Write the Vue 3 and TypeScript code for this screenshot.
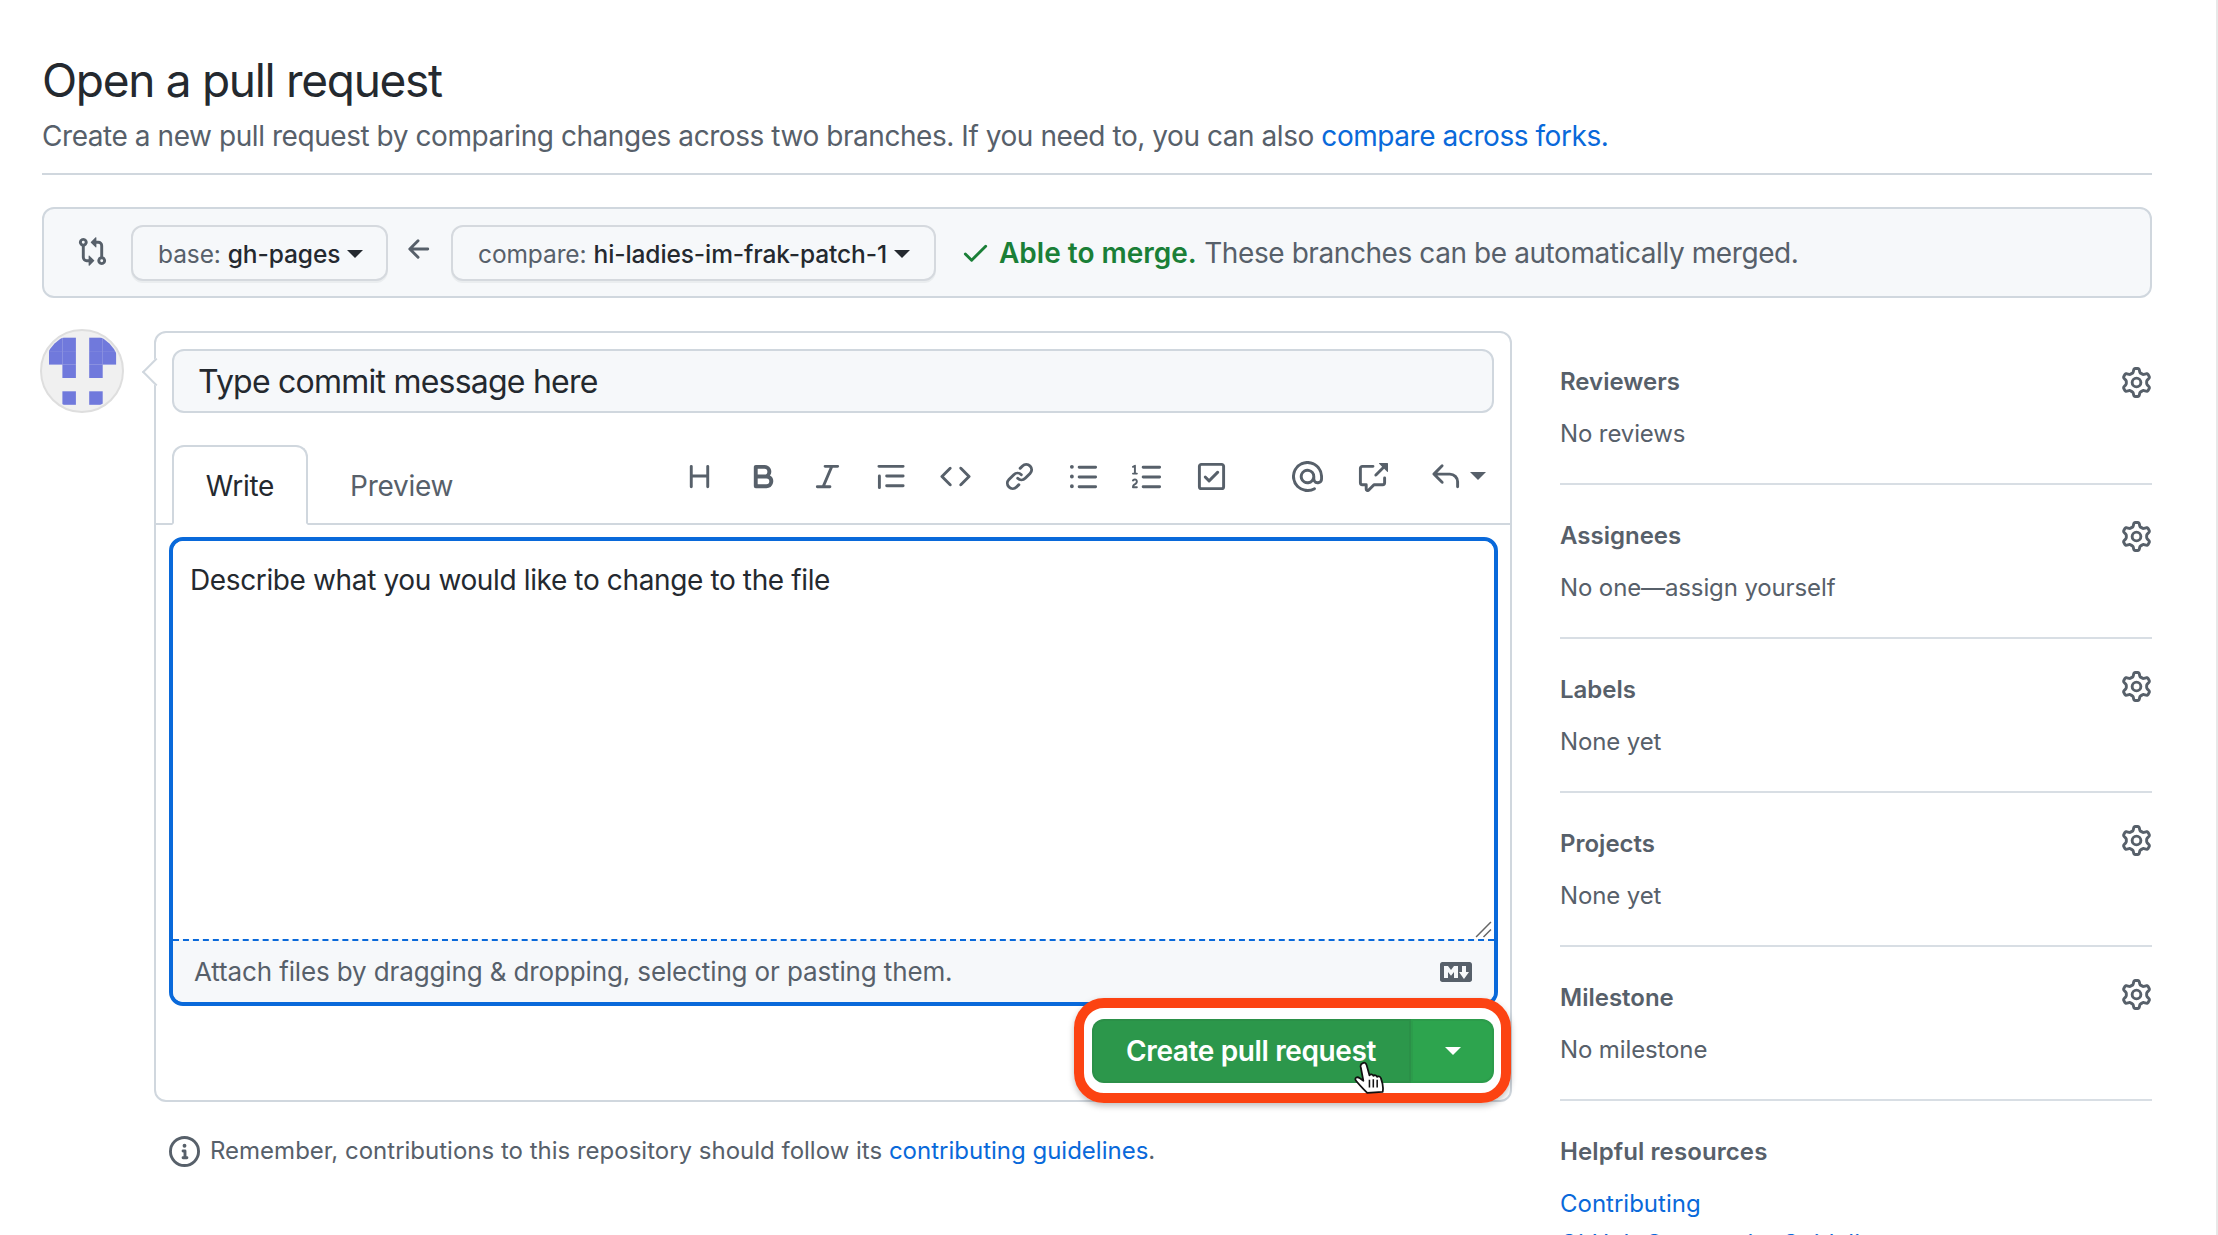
<script setup lang="ts">
type Tool = { name: string; d: string; gap: string };
type Section = { title: string; value: string; raised?: boolean };

const gearPath =
  "M8 0a8.2 8.2 0 0 1 .701.031C9.444.095 9.99.645 10.16 1.29l.288 1.107c.018.066.079.158.212.224.231.114.454.243.668.386.123.082.233.09.299.071l1.103-.303c.644-.176 1.392.021 1.82.63.27.385.506.792.704 1.218.315.675.111 1.422-.364 1.891l-.814.806c-.049.048-.098.147-.088.294.016.257.016.515 0 .772-.01.147.038.246.088.294l.814.806c.475.469.679 1.216.364 1.891a7.977 7.977 0 0 1-.704 1.217c-.428.61-1.176.807-1.82.63l-1.102-.302c-.067-.019-.177-.011-.3.071a5.909 5.909 0 0 1-.668.386c-.133.066-.194.158-.211.224l-.29 1.106c-.168.646-.715 1.196-1.458 1.26a8.006 8.006 0 0 1-1.402 0c-.743-.064-1.289-.614-1.458-1.26l-.289-1.106c-.018-.066-.079-.158-.212-.224a5.738 5.738 0 0 1-.668-.386c-.123-.082-.233-.09-.299-.071l-1.103.303c-.644.176-1.392-.021-1.82-.63a8.12 8.12 0 0 1-.704-1.218c-.315-.675-.111-1.422.363-1.891l.815-.806c.05-.048.098-.147.088-.294a6.214 6.214 0 0 1 0-.772c.01-.147-.038-.246-.088-.294l-.815-.806C.635 6.045.431 5.298.746 4.623a7.92 7.92 0 0 1 .704-1.217c.428-.61 1.176-.807 1.82-.63l1.102.302c.067.019.177.011.3-.071.214-.143.437-.272.668-.386.133-.066.194-.158.211-.224l.29-1.106C6.009.645 6.556.095 7.299.03 7.53.01 7.764 0 8 0Zm-.571 1.525c-.036.003-.108.036-.137.146l-.289 1.105c-.147.561-.549.967-.998 1.189-.173.086-.34.183-.5.29-.417.278-.97.423-1.529.27l-1.103-.303c-.109-.03-.175.016-.195.045-.22.312-.412.644-.573.99-.014.031-.021.11.059.19l.815.806c.411.406.562.957.53 1.456a4.709 4.709 0 0 0 0 .582c.032.499-.119 1.05-.53 1.456l-.815.806c-.081.08-.073.159-.059.19.162.346.353.677.573.989.02.03.085.076.195.046l1.102-.303c.56-.153 1.113-.008 1.53.27.161.107.328.204.501.29.447.222.85.629.997 1.189l.289 1.105c.029.109.101.143.137.146a6.6 6.6 0 0 0 1.142 0c.036-.003.108-.036.137-.146l.289-1.105c.147-.561.549-.967.998-1.189.173-.086.34-.183.5-.29.417-.278.97-.423 1.529-.27l1.103.303c.109.029.175-.016.195-.045.22-.313.411-.644.573-.99.014-.031.021-.11-.059-.19l-.815-.806c-.411-.406-.562-.957-.53-1.456a4.709 4.709 0 0 0 0-.582c-.032-.499.119-1.05.53-1.456l.815-.806c.081-.08.073-.159.059-.19a6.464 6.464 0 0 0-.573-.989c-.02-.03-.085-.076-.195-.046l-1.102.303c-.56.153-1.113.008-1.53-.27a4.44 4.44 0 0 0-.501-.29c-.447-.222-.85-.629-.997-1.189l-.289-1.105c-.029-.11-.101-.143-.137-.146a6.6 6.6 0 0 0-1.142 0ZM11 8a3 3 0 1 1-6 0 3 3 0 0 1 6 0ZM9.5 8a1.5 1.5 0 1 0-3.001.001A1.5 1.5 0 0 0 9.5 8Z";

const tools: Tool[] = [
  { name: "heading", gap: "g33", d: "M3.75 2a.75.75 0 0 1 .75.75V7h7V2.75a.75.75 0 0 1 1.5 0v10.5a.75.75 0 0 1-1.5 0V8.5h-7v4.75a.75.75 0 0 1-1.5 0V2.75A.75.75 0 0 1 3.75 2Z" },
  { name: "bold", gap: "g33", d: "M4 2h4.5a3.501 3.501 0 0 1 2.852 5.53A3.499 3.499 0 0 1 9.5 14H4a1 1 0 0 1-1-1V3a1 1 0 0 1 1-1Zm1 7v3h4.5a1.5 1.5 0 0 0 0-3Zm3.5-2a1.5 1.5 0 0 0 0-3H5v3Z" },
  { name: "italic", gap: "g33", d: "M6 2.75A.75.75 0 0 1 6.75 2h6.5a.75.75 0 0 1 0 1.5h-2.505l-3.858 9H9.25a.75.75 0 0 1 0 1.5h-6.5a.75.75 0 0 1 0-1.5h2.505l3.858-9H6.75A.75.75 0 0 1 6 2.75Z" },
  { name: "quote", gap: "g33", d: "M.75 2.75A.75.75 0 0 1 1.5 2h12.5a.75.75 0 0 1 0 1.5H1.5a.75.75 0 0 1-.75-.75Zm4 5A.75.75 0 0 1 5.5 7h8.5a.75.75 0 0 1 0 1.5H5.5a.75.75 0 0 1-.75-.75Zm0 5a.75.75 0 0 1 .75-.75h8.5a.75.75 0 0 1 0 1.5H5.5a.75.75 0 0 1-.75-.75ZM2.5 7.75v6a.75.75 0 0 1-1.5 0v-6a.75.75 0 0 1 1.5 0Z" },
  { name: "code", gap: "g33", d: "m11.28 3.22 4.25 4.25a.75.75 0 0 1 0 1.06l-4.25 4.25a.749.749 0 0 1-1.275-.326.749.749 0 0 1 .215-.734L13.94 8l-3.72-3.72a.749.749 0 0 1 .326-1.275.749.749 0 0 1 .734.215Zm-6.56 0a.751.751 0 0 1 1.042.018.751.751 0 0 1 .018 1.042L2.06 8l3.72 3.72a.749.749 0 0 1-.326 1.275.749.749 0 0 1-.734-.215L.47 8.53a.75.75 0 0 1 0-1.06Z" },
  { name: "link", gap: "g33", d: "m7.775 3.275 1.25-1.25a3.5 3.5 0 1 1 4.95 4.95l-2.5 2.5a3.5 3.5 0 0 1-4.95 0 .751.751 0 0 1 .018-1.042.751.751 0 0 1 1.042-.018 1.998 1.998 0 0 0 2.83 0l2.5-2.5a2.002 2.002 0 0 0-2.83-2.83l-1.25 1.25a.751.751 0 0 1-1.042-.018.751.751 0 0 1-.018-1.042Zm-4.69 9.64a1.998 1.998 0 0 0 2.83 0l1.25-1.25a.751.751 0 0 1 1.042.018.751.751 0 0 1 .018 1.042l-1.25 1.25a3.5 3.5 0 1 1-4.95-4.95l2.5-2.5a3.5 3.5 0 0 1 4.95 0 .751.751 0 0 1-.018 1.042.751.751 0 0 1-1.042.018 1.998 1.998 0 0 0-2.83 0l-2.5 2.5a1.998 1.998 0 0 0 0 2.83Z" },
  { name: "ul", gap: "g33", d: "M5.75 2.5h8.5a.75.75 0 0 1 0 1.5h-8.5a.75.75 0 0 1 0-1.5Zm0 5h8.5a.75.75 0 0 1 0 1.5h-8.5a.75.75 0 0 1 0-1.5Zm0 5h8.5a.75.75 0 0 1 0 1.5h-8.5a.75.75 0 0 1 0-1.5ZM2 14a1 1 0 1 1 0-2 1 1 0 0 1 0 2Zm1-6a1 1 0 1 1-2 0 1 1 0 0 1 2 0ZM2 4a1 1 0 1 1 0-2 1 1 0 0 1 0 2Z" },
  { name: "ol", gap: "g33", d: "M5 3.25a.75.75 0 0 1 .75-.75h8.5a.75.75 0 0 1 0 1.5h-8.5A.75.75 0 0 1 5 3.25Zm0 5a.75.75 0 0 1 .75-.75h8.5a.75.75 0 0 1 0 1.5h-8.5A.75.75 0 0 1 5 8.25Zm0 5a.75.75 0 0 1 .75-.75h8.5a.75.75 0 0 1 0 1.5h-8.5a.75.75 0 0 1-.75-.75ZM.924 10.32a.5.5 0 0 1-.851-.525l.001-.001.001-.002.002-.004.007-.011c.097-.144.215-.273.348-.384.228-.19.588-.392 1.068-.392.468 0 .858.181 1.126.484.259.294.377.673.377 1.038 0 .987-.686 1.495-1.156 1.845l-.047.035c-.303.225-.522.4-.654.597h1.357a.5.5 0 0 1 0 1H.5a.5.5 0 0 1-.5-.5c0-1.005.692-1.52 1.167-1.875l.035-.025c.531-.396.8-.625.8-1.078a.57.57 0 0 0-.128-.376C1.806 10.068 1.695 10 1.5 10a.658.658 0 0 0-.429.163.835.835 0 0 0-.144.153ZM2.003 2.5V6h.503a.5.5 0 0 1 0 1H.5a.5.5 0 0 1 0-1h.503V3.308l-.28.14a.5.5 0 0 1-.446-.895l1.003-.5a.5.5 0 0 1 .723.447Z" },
  { name: "task", gap: "g65", d: "M2.75 1h10.5c.966 0 1.75.784 1.75 1.75v10.5A1.75 1.75 0 0 1 13.25 15H2.75A1.75 1.75 0 0 1 1 13.25V2.75C1 1.784 1.784 1 2.75 1ZM2.5 2.75v10.5c0 .138.112.25.25.25h10.5a.25.25 0 0 0 .25-.25V2.75a.25.25 0 0 0-.25-.25H2.75a.25.25 0 0 0-.25.25Zm9.28 3.53-4.5 4.5a.75.75 0 0 1-1.06 0l-2-2a.751.751 0 0 1 .018-1.042.751.751 0 0 1 1.042-.018l1.47 1.47 3.97-3.97a.751.751 0 0 1 1.042.018.751.751 0 0 1 .018 1.042Z" },
  { name: "mention", gap: "g34", d: "M4.75 2.37a6.501 6.501 0 0 0 6.5 11.26.75.75 0 0 1 .75 1.298A7.999 7.999 0 0 1 .989 4.148 8 8 0 0 1 16 7.75v1.5a2.75 2.75 0 0 1-5.072 1.475 3.999 3.999 0 0 1-6.65-4.19A4 4 0 0 1 12 8v1.25a1.25 1.25 0 0 0 2.5 0V7.867a6.5 6.5 0 0 0-9.75-5.496ZM10.5 8a2.5 2.5 0 1 0-5 0 2.5 2.5 0 0 0 5 0Z" },
  { name: "xref", gap: "g42", d: "M2.75 3.5a.25.25 0 0 0-.25.25v7.5c0 .138.112.25.25.25h2a.75.75 0 0 1 .75.75v2.19l2.72-2.72a.749.749 0 0 1 .53-.22h4.5a.25.25 0 0 0 .25-.25v-2.5a.75.75 0 0 1 1.5 0v2.5A1.75 1.75 0 0 1 13.25 13H9.06l-2.573 2.573A1.458 1.458 0 0 1 4 14.543V13H2.75A1.75 1.75 0 0 1 1 11.25v-7.5C1 2.784 1.784 2 2.75 2h5.5a.75.75 0 0 1 0 1.5ZM16 1.25v4.146a.25.25 0 0 1-.427.177L14.03 4.03l-3.75 3.75a.749.749 0 0 1-1.275-.326.749.749 0 0 1 .215-.734l3.75-3.75-1.543-1.543A.25.25 0 0 1 11.604 1h4.146a.25.25 0 0 1 .25.25Z" },
  { name: "reply", gap: "g0", d: "M6.78 1.97a.75.75 0 0 1 0 1.06L3.81 6h6.44A4.75 4.75 0 0 1 15 10.75v2.5a.75.75 0 0 1-1.5 0v-2.5a3.25 3.25 0 0 0-3.25-3.25H3.81l2.97 2.97a.749.749 0 0 1-.326 1.275.749.749 0 0 1-.734-.215L1.47 7.28a.75.75 0 0 1 0-1.06l4.25-4.25a.75.75 0 0 1 1.06 0Z" },
];

const sections: Section[] = [
  { title: "Reviewers", value: "No reviews" },
  { title: "Assignees", value: "No one—assign yourself" },
  { title: "Labels", value: "None yet", raised: true },
  { title: "Projects", value: "None yet", raised: true },
  { title: "Milestone", value: "No milestone", raised: true },
];

// identicon cells as [col, row]
const cells: [number, number][] = [
  [0, 0], [1, 0], [3, 0], [4, 0],
  [0, 1], [1, 1], [3, 1], [4, 1],
  [1, 2], [3, 2],
  [1, 4], [3, 4],
];
</script>

<template>
  <div class="page">
    <header class="head">
      <h1>Open a pull request</h1>
      <p>
        Create a new pull request by comparing changes across two branches. If you need to, you can also
        <a>compare across forks</a><span class="dot">.</span>
      </p>
    </header>

    <div class="range">
      <svg class="icon compare-icon" viewBox="0 0 16 16"><path d="M9.573.677A.25.25 0 0 1 10 .854V2.5h1A2.5 2.5 0 0 1 13.5 5v5.628a2.251 2.251 0 1 1-1.5 0V5a1 1 0 0 0-1-1h-1v1.646a.25.25 0 0 1-.427.177L7.177 3.427a.25.25 0 0 1 0-.354ZM6 12v-1.646a.25.25 0 0 1 .427-.177l2.396 2.396a.25.25 0 0 1 0 .354l-2.396 2.396A.25.25 0 0 1 6 15.146V13.5H5A2.5 2.5 0 0 1 2.5 11V5.372a2.25 2.25 0 1 1 1.5 0V11a1 1 0 0 0 1 1ZM4 3.25a.75.75 0 1 0-1.5 0 .75.75 0 0 0 1.5 0ZM12.75 12a.75.75 0 1 0 0 1.5.75.75 0 0 0 0-1.5Z" /></svg>
      <div class="select base"><span class="muted">base:</span> <span class="ref">gh-pages</span><i class="caret dark"></i></div>
      <svg class="icon arrow" viewBox="0 0 16 16"><path d="M7.78 12.53a.75.75 0 0 1-1.06 0L2.47 8.28a.75.75 0 0 1 0-1.06l4.25-4.25a.751.751 0 0 1 1.042.018.751.751 0 0 1 .018 1.042L4.81 7h7.44a.75.75 0 0 1 0 1.5H4.81l2.97 2.97a.75.75 0 0 1 0 1.06Z" /></svg>
      <div class="select head-ref"><span class="muted">compare:</span> <span class="ref">hi-ladies-im-frak-patch-1</span><i class="caret dark"></i></div>
      <svg class="icon check" viewBox="0 0 16 16"><path d="M13.78 4.22a.75.75 0 0 1 0 1.06l-7.25 7.25a.75.75 0 0 1-1.06 0L2.22 9.28a.751.751 0 0 1 .018-1.042.751.751 0 0 1 1.042-.018L6 10.94l6.72-6.72a.75.75 0 0 1 1.06 0Z" /></svg>
      <div class="merge"><strong>Able to merge.</strong> These branches can be automatically merged.</div>
    </div>

    <div class="layout">
      <div class="left">
        <div class="discussion">
          <svg class="avatar" viewBox="0 0 84 84">
            <defs><clipPath id="av"><circle cx="42" cy="42" r="38.8" /></clipPath></defs>
            <circle cx="42" cy="42" r="41" fill="#f0f0f0" stroke="#dedede" stroke-width="2" />
            <g clip-path="url(#av)" fill="#7079dc">
              <rect v-for="c in cells" :key="c.join('-')" :x="9 + c[0] * 13.4" :y="8.7 + c[1] * 13.4" width="13.5" height="13.5" />
            </g>
          </svg>
          <div class="card">
            <i class="pointer"></i>
            <div class="title-input">Type commit message here</div>
            <div class="tabbar">
              <div class="tab active">Write</div>
              <div class="tab">Preview</div>
              <div class="toolbar">
                <svg v-for="t in tools" :key="t.name" class="icon" :class="t.gap" viewBox="0 0 16 16"><path :d="t.d" /></svg>
                <i class="caret grey"></i>
              </div>
            </div>
            <div class="editor">
              <div class="body">
                Describe what you would like to change to the file
                <svg class="grip" viewBox="0 0 16 16"><path d="M15 1 1 15M15 8l-7 7" stroke="#666" stroke-width="1.4" fill="none" /></svg>
              </div>
              <div class="attach">
                <span>Attach files by dragging &amp; dropping, selecting or pasting them.</span>
                <svg class="md" viewBox="0 0 16 16"><path d="M14.85 3c.63 0 1.15.52 1.14 1.15v7.7c0 .63-.51 1.15-1.15 1.15H1.15C.52 13 0 12.48 0 11.86V4.15C0 3.52.52 3 1.15 3ZM9 11V5H7L5.5 7 4 5H2v6h2V8l1.5 1.92L7 8v3Zm2.99.5L14.5 8H13V5h-2v3H9.5Z" /></svg>
              </div>
            </div>
            <div class="actions">
              <div class="btn-group">
                <div class="btn-main">Create pull request</div>
                <div class="btn-more"><i class="caret white"></i></div>
                <div class="highlight"></div>
                <svg class="hand" viewBox="0 0 29 30">
                  <path d="M8 2C9.5 1 11 2 11.5 4L14 13C15 11.5 17 12 17.5 13.5 18.5 12.5 20.5 13 21 14.5 22 13.5 24 14 24.5 16 26 20 27 23 26 28L12 29C9 26 5 22 1.5 17.5.5 15 3 14 5 15.5L8.5 18 6 5C5.8 3.5 6.8 2.5 8 2Z" fill="#fff" stroke="#111" stroke-width="1.6" stroke-linejoin="round" />
                  <path d="M14 17v7M17.5 16.5v7.5M21 17v7" stroke="#111" stroke-width="1.4" fill="none" />
                </svg>
              </div>
            </div>
          </div>
        </div>
        <div class="note">
          <svg class="icon" viewBox="0 0 16 16"><path d="M0 8a8 8 0 1 1 16 0A8 8 0 0 1 0 8Zm8-6.5a6.5 6.5 0 1 0 0 13 6.5 6.5 0 0 0 0-13ZM6.5 7.75A.75.75 0 0 1 7.25 7h1a.75.75 0 0 1 .75.75v2.75h.25a.75.75 0 0 1 0 1.5h-2a.75.75 0 0 1 0-1.5h.25v-2h-.25a.75.75 0 0 1-.75-.75ZM8 6a1 1 0 1 1 0-2 1 1 0 0 1 0 2Z" /></svg>
          <span>Remember, contributions to this repository should follow its <a>contributing guidelines</a>.</span>
        </div>
      </div>

      <aside class="side">
        <section v-for="s in sections" :key="s.title" class="side-item">
          <div class="side-head">
            <span>{{ s.title }}</span>
            <svg class="icon gear" :class="{ raised: s.raised }" viewBox="0 0 16 16"><path :d="gearPath" /></svg>
          </div>
          <div class="side-value">{{ s.value }}</div>
        </section>
        <section class="side-links">
          <div class="side-head"><span>Helpful resources</span></div>
          <a class="first">Contributing</a>
          <a>GitHub Community Guidelines</a>
        </section>
      </aside>
    </div>
  </div>
</template>

<style>
html, body { margin: 0; background: #fff; }
</style>

<style scoped>
.page {
  box-sizing: border-box;
  width: 2218px;
  height: 1235px;
  overflow: hidden;
  padding: 51px 64px 0 42px;
  border-right: 2px solid #e8e8e8;
  font-family: Inter, "Liberation Sans", sans-serif;
  color: #24292f;
}
a { color: #0969da; }
.icon { width: 31px; height: 31px; fill: #57606a; flex: none; display: block; }

.head { border-bottom: 2px solid #d0d7de; padding-bottom: 17px; }
.head h1 { margin: 0; font-size: 46px; line-height: 58px; font-weight: 400; letter-spacing: -1.3px; }
.head p { margin: 7px 0 0; font-size: 28px; line-height: 40px; color: #57606a; letter-spacing: -0.44px; }
.dot { color: #0969da; }

.range {
  margin-top: 32px;
  height: 91px;
  box-sizing: border-box;
  display: flex;
  align-items: center;
  background: #f6f8fa;
  border: 2px solid #d0d7de;
  border-radius: 12px;
  padding-left: 33px;
}
.compare-icon { margin: -3px 23px 0 0; }
.select {
  height: 56px;
  box-sizing: border-box;
  display: flex;
  align-items: center;
  gap: 7px;
  padding: 2px 0 0 25px;
  font-size: 24.5px;
  letter-spacing: -0.1px;
  white-space: nowrap;
  background: #f6f8fa;
  border: 2px solid #d5d9de;
  border-radius: 12px;
  box-shadow: 0 2px 0 rgba(27, 31, 36, 0.05);
}
.select.base { width: 257px; }
.select.head-ref { width: 485px; }
.muted { color: #57606a; }
.ref { font-weight: 500; }
.caret {
  display: block;
  flex: none;
  width: 0;
  height: 0;
  border-left: 8px solid transparent;
  border-right: 8px solid transparent;
  border-top: 8px solid #24292f;
}
.caret.grey { border-top-color: #57606a; margin-left: 9px; }
.caret.white { border-top-color: #fff; }
.arrow { margin: -6px 16px 0 16px; }
.check { fill: #1a7f37; margin: 0 8px 0 24px; }
.merge { font-size: 28px; color: #57606a; letter-spacing: -0.42px; padding-top: 1px; }
.merge strong { color: #1a7f37; font-weight: 600; letter-spacing: 0; }

.layout {
  margin-top: 33px;
  display: grid;
  grid-template-columns: 1470px 592px;
  column-gap: 48px;
}
.discussion { display: flex; align-items: flex-start; }
.avatar { width: 84px; height: 84px; flex: none; margin: -2px 30px 0 -2px; }
.card {
  position: relative;
  flex: 1;
  box-sizing: border-box;
  height: 771px;
  padding: 16px 16px 0;
  border: 2px solid #d0d7de;
  border-radius: 12px;
  background: #fff;
}
.pointer {
  position: absolute;
  left: -10px;
  top: 29px;
  width: 18px;
  height: 18px;
  transform: rotate(45deg);
  background: #fff;
  border-left: 2px solid #d0d7de;
  border-bottom: 2px solid #d0d7de;
}
.title-input {
  position: relative;
  height: 64px;
  box-sizing: border-box;
  display: flex;
  align-items: center;
  padding-left: 24px;
  font-size: 32px;
  letter-spacing: -0.77px;
  background: #f6f8fa;
  border: 2px solid #d0d7de;
  border-radius: 12px;
}

.tabbar {
  margin: 32px -16px 0;
  padding: 0 0 0 16px;
  height: 80px;
  box-sizing: border-box;
  display: flex;
  border-bottom: 2px solid #d0d7de;
}
.tab {
  box-sizing: border-box;
  height: 80px;
  display: flex;
  align-items: center;
  justify-content: center;
  padding: 2px 40px 0;
  font-size: 28px;
  letter-spacing: -0.25px;
  color: #57606a;
  border: 2px solid transparent;
}
.tab.active {
  width: 136px;
  padding: 2px 0 0;
  color: #24292f;
  background: #fff;
  border-color: #d0d7de;
  border-bottom-color: #fff;
  border-radius: 12px 12px 0 0;
}
.toolbar {
  margin-left: auto;
  display: flex;
  align-items: center;
  padding: 0 24px 16px 0;
}
.g33 { margin-right: 33px; }
.g34 { margin-right: 34px; }
.g42 { margin-right: 42px; }
.g65 { margin-right: 65px; }

.editor {
  margin: 12px -4px 0 -3px;
  height: 469px;
  box-sizing: border-box;
  display: flex;
  flex-direction: column;
  border: 4px solid #0969da;
  border-radius: 14px;
  overflow: hidden;
}
.body {
  position: relative;
  flex: 1;
  padding: 19px 14px 0 17px;
  font-size: 28px;
  line-height: 40px;
  letter-spacing: -0.37px;
  background: #fff;
}
.grip { position: absolute; right: 2px; bottom: 1px; width: 17px; height: 17px; }
.attach {
  height: 63px;
  box-sizing: border-box;
  display: flex;
  align-items: center;
  justify-content: space-between;
  padding: 0 22px 0 21px;
  font-size: 26px;
  letter-spacing: -0.13px;
  color: #57606a;
  background: #f6f8fa;
  border-top: 2px dashed #0969da;
}
.md { width: 32px; height: 32px; fill: #57606a; display: block; }

.actions { display: flex; justify-content: flex-end; margin-top: 13px; }
.btn-group {
  position: relative;
  display: flex;
  width: 402px;
  height: 64px;
  color: #fff;
  font-size: 28px;
  font-weight: 600;
  letter-spacing: -0.37px;
}
.btn-main {
  flex: 1;
  display: flex;
  align-items: center;
  padding-left: 34px;
  background: #2c974b;
  border-radius: 12px 0 0 12px;
  box-shadow: inset 0 0 0 2px rgba(27, 31, 36, 0.06);
}
.btn-more {
  width: 83px;
  display: flex;
  align-items: center;
  justify-content: center;
  background: #2da44e;
  border-radius: 0 12px 12px 0;
  box-shadow: inset 0 0 0 2px rgba(27, 31, 36, 0.06);
}
.highlight {
  position: absolute;
  inset: -21px -17px -20px -18px;
  border: 10px solid #fc4312;
  border-radius: 30px;
  box-shadow: 0 3px 6px rgba(0, 0, 0, 0.25);
}
.hand { position: absolute; left: 262px; top: 41px; width: 32px; height: 35px; }

.note {
  margin: 31px 0 0 127px;
  display: flex;
  align-items: center;
  gap: 10px;
  font-size: 24px;
  line-height: 36px;
  color: #57606a;
}

.side-item { padding: 32px 0 31px; border-bottom: 2px solid #d8dee4; }
.side-head {
  height: 36px;
  display: flex;
  align-items: center;
  justify-content: space-between;
  font-size: 24px;
  font-weight: 600;
  color: #57606a;
}
.gear { margin-top: 2px; }
.gear.raised { margin-top: 0; margin-bottom: 6px; }
.side-value { margin-top: 17px; font-size: 24px; line-height: 36px; letter-spacing: -0.12px; color: #57606a; }
.side-links { padding-top: 33px; font-size: 24px; line-height: 36px; }
.side-links .side-head { letter-spacing: 0.1px; }
.side-links a { display: block; margin-top: 4px; }
.side-links a.first { margin-top: 16px; }
</style>
